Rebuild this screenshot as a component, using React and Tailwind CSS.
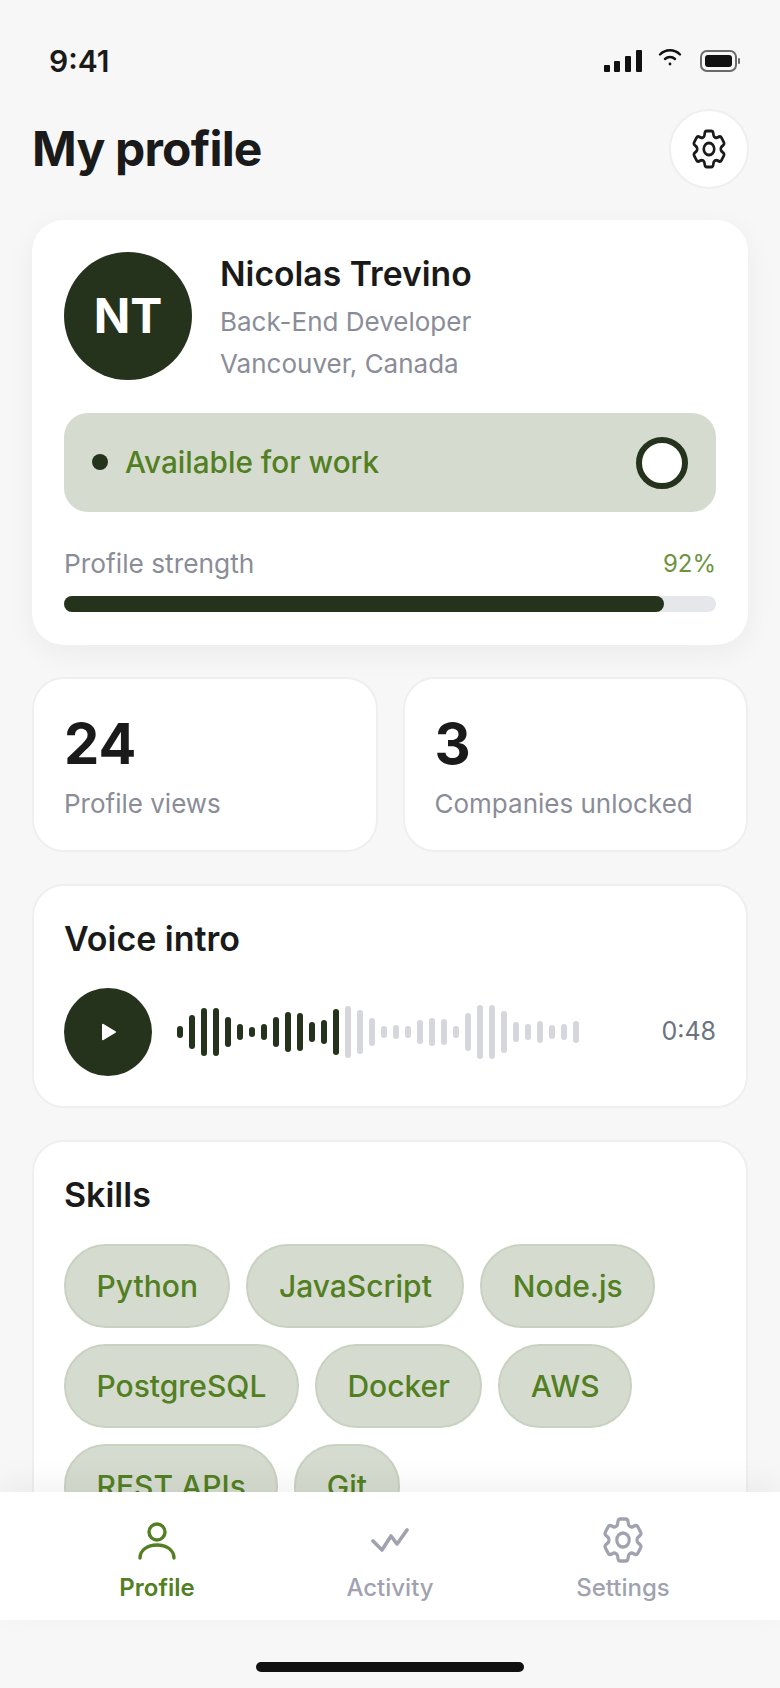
import React from 'react';
import { HiOutlineCog6Tooth } from 'react-icons/hi2';

const inter = 'font-["Inter",sans-serif]';

const darkBars = [12, 34, 48, 48, 30, 16, 10, 16, 30, 40, 38, 20, 24, 46];
const lightBars = [52, 44, 28, 12, 14, 12, 24, 28, 26, 12, 38, 54, 54, 42, 20, 16, 22, 14, 16, 22];

const skills = ['Python', 'JavaScript', 'Node.js', 'PostgreSQL', 'Docker', 'AWS', 'REST APIs', 'Git'];

const StatusIcons = () => (
  <div className="flex items-center">
    <svg width="38" height="24" viewBox="0 0 38 24" className="text-[#111111]" fill="currentColor">
      <rect x="0" y="16" width="6" height="7" rx="1" />
      <rect x="10" y="12" width="6" height="11" rx="1" />
      <rect x="21" y="7" width="6" height="16" rx="1" />
      <rect x="32" y="1" width="6" height="22" rx="1" />
    </svg>
    <svg width="24" height="18" viewBox="0 0 24 18" fill="none" stroke="#111111" strokeWidth="2.4" strokeLinecap="round" className="ml-[16px] -mt-[6px]">
      <path d="M2 5.5a14 14 0 0 1 20 0" />
      <path d="M7 10a7.4 7.4 0 0 1 10 0" />
      <circle cx="12" cy="15" r="1.4" fill="#111111" stroke="none" />
    </svg>
    <svg width="40" height="22" viewBox="0 0 40 22" fill="none" className="ml-[18px]">
      <rect x="1" y="1" width="35" height="20" rx="6" stroke="#6b6b6b" strokeWidth="2" />
      <rect x="5" y="5" width="27" height="12" rx="3" fill="#111111" />
      <rect x="38" y="8" width="2" height="6" rx="1" fill="#6b6b6b" />
    </svg>
  </div>
);

const Waveform = () => (
  <div className="flex items-center gap-[6px]">
    {darkBars.map((h, i) => (
      <div key={`d${i}`} className="w-[6px] rounded-full bg-[#25331d]" style={{ height: h }} />
    ))}
    {lightBars.map((h, i) => (
      <div key={`l${i}`} className="w-[6px] rounded-full bg-[#d6d7dc]" style={{ height: h }} />
    ))}
  </div>
);

const NavItem = ({ label, active, icon }) => (
  <div className="flex w-[233px] flex-col items-center">
    <div className="flex h-[44px] items-center justify-center">{icon}</div>
    <span className={`mt-[10px] text-[24px] leading-[32px] ${active ? 'font-semibold text-[#527f22]' : 'font-medium text-[#a0a3af]'}`}>
      {label}
    </span>
  </div>
);

export default function App() {
  return (
    <div className={`flex h-[1688px] w-[780px] flex-col overflow-hidden bg-[#f7f7f7] ${inter}`}>
      <div className="min-h-0 flex-1 overflow-hidden">
        {/* status bar */}
        <div className="mt-[40px] flex h-[42px] items-center justify-between pl-[49px] pr-[40px]">
          <span className="text-[30px] font-semibold leading-none text-[#1a1a1a]">9:41</span>
          <StatusIcons />
        </div>

        {/* header */}
        <div className="mt-[27px] flex h-[80px] items-center justify-between pl-[32px] pr-[31px]">
          <h1 className="text-[48px] font-bold leading-none tracking-[-0.8px] text-[#1a1a1a]">My profile</h1>
          <button className="flex h-[80px] w-[80px] items-center justify-center rounded-full border-2 border-[#efefef] bg-white text-[#1a1a1a]">
            <HiOutlineCog6Tooth preserveAspectRatio="none" className="h-[48px] w-[42px]" />
          </button>
        </div>

        <div className="mt-[31px] flex flex-col gap-[32px] px-[32px]">
          {/* profile card */}
          <section className="h-[425px] rounded-[32px] bg-white p-[32px] shadow-[0_8px_30px_rgba(0,0,0,0.05)]">
            <div className="flex h-[128px] items-start">
              <div className="flex h-[128px] w-[128px] items-center justify-center rounded-full bg-[#25331d] text-[48px] font-bold text-white">
                NT
              </div>
              <div className="ml-[28px] flex flex-col">
                <span className="mt-[2px] text-[33.7px] font-semibold leading-[40px] text-[#1a1a1a]">Nicolas Trevino</span>
                <span className="mt-[10px] text-[26px] leading-[36px] text-[#8a8d98]">Back-End Developer</span>
                <span className="mt-[6px] text-[26px] leading-[36px] text-[#8a8d98]">Vancouver, Canada</span>
              </div>
            </div>

            <div className="mt-[33px] flex h-[99px] items-center justify-between rounded-[24px] bg-[#d5dccf] px-[28px]">
              <div className="flex items-center gap-[17px]">
                <span className="h-[16px] w-[16px] rounded-full bg-[#25331d]" />
                <span className="text-[29.7px] font-medium text-[#527f22]">Available for work</span>
              </div>
              <span className="h-[52px] w-[52px] rounded-full border-[6px] border-[#25331d] bg-white" />
            </div>

            <div className="mt-[36px] flex items-center justify-between leading-[32px]">
              <span className="text-[26.3px] text-[#8a8d98]">Profile strength</span>
              <span className="text-[24px] text-[#6c9440]">92%</span>
            </div>
            <div className="mt-[16px] h-[16px] rounded-full bg-[#e5e7eb]">
              <div className="h-full rounded-full bg-[#25331d]" style={{ width: '92%' }} />
            </div>
          </section>

          {/* stats */}
          <div className="grid grid-cols-2 gap-[25px]">
            <div className="h-[175px] rounded-[32px] border-2 border-[#efeff0] bg-white pl-[30px] pt-[31px]">
              <div className="text-[56px] font-bold leading-[68px] text-[#1a1a1a]">24</div>
              <div className="mt-[8px] text-[26px] leading-[36px] text-[#8a8d98]">Profile views</div>
            </div>
            <div className="h-[175px] rounded-[32px] border-2 border-[#efeff0] bg-white pl-[30px] pt-[31px]">
              <div className="text-[56px] font-bold leading-[68px] text-[#1a1a1a]">3</div>
              <div className="mt-[8px] text-[26px] leading-[36px] text-[#8a8d98]">Companies unlocked</div>
            </div>
          </div>

          {/* voice intro */}
          <section className="h-[224px] rounded-[32px] border-2 border-[#efeff0] bg-white px-[30px] pt-[33px]">
            <h2 className="text-[34px] font-semibold leading-[40px] text-[#1a1a1a]">Voice intro</h2>
            <div className="mt-[29px] flex items-center">
              <button className="flex h-[88px] w-[88px] shrink-0 items-center justify-center rounded-full bg-[#25331d]">
                <svg width="16" height="18" viewBox="0 0 16 18" fill="#ffffff" className="ml-[2px]">
                  <path d="M1 1.8v14.4a1 1 0 0 0 1.5.85l12-7.2a1 1 0 0 0 0-1.7l-12-7.2A1 1 0 0 0 1 1.8z" />
                </svg>
              </button>
              <div className="ml-[25px]">
                <Waveform />
              </div>
              <span className="ml-auto text-[25px] text-[#6b7280]">0:48</span>
            </div>
          </section>

          {/* skills */}
          <section className="rounded-[32px] border-2 border-[#efeff0] bg-white px-[30px] pb-[32px] pt-[33px]">
            <h2 className="text-[34px] font-semibold leading-[40px] text-[#1a1a1a]">Skills</h2>
            <div className="mt-[29px] flex flex-wrap gap-[16px]">
              {skills.map((s) => (
                <span key={s} className="flex h-[84px] items-center rounded-[42px] border-2 border-[#c9d1c1] bg-[#d5dccf] px-[30.5px] text-[30px] font-medium text-[#527f22]">
                  {s}
                </span>
              ))}
            </div>
          </section>
        </div>
      </div>

      {/* tab bar */}
      <nav className="relative flex h-[128px] shrink-0 justify-center bg-white pt-[26px] shadow-[0_-10px_30px_rgba(0,0,0,0.05)]">
        <NavItem
          label="Profile"
          active
          icon={
            <svg width="38" height="38" viewBox="0 0 38 38" fill="none" stroke="#527f22" strokeWidth="3.4" strokeLinecap="round" className="mt-[2px]">
              <circle cx="19" cy="10" r="8" />
              <path d="M2 36c0-8 7.5-13 17-13s17 5 17 13" />
            </svg>
          }
        />
        <NavItem
          label="Activity"
          icon={
            <svg width="38" height="26" viewBox="0 0 38 26" fill="none" stroke="#a0a3af" strokeWidth="3.6" strokeLinecap="round" strokeLinejoin="round">
              <path d="M2 14l9 9 9-14 6 8L36 3" />
            </svg>
          }
        />
        <NavItem
          label="Settings"
          icon={<HiOutlineCog6Tooth preserveAspectRatio="none" className="h-[56px] w-[50px] shrink-0 text-[#a0a3af]" />}
        />
      </nav>

      {/* home indicator */}
      <div className="flex h-[68px] shrink-0 justify-center pt-[42px]">
        <div className="h-[10px] w-[268px] rounded-full bg-[#111111]" />
      </div>
    </div>
  );
}
